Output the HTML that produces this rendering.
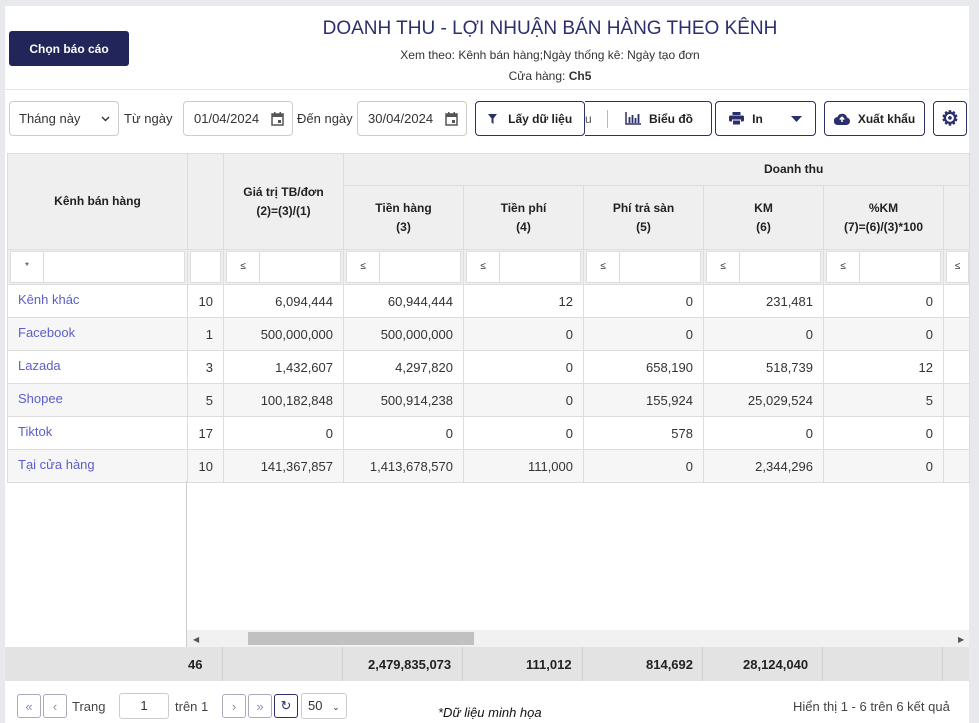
<!DOCTYPE html>
<html><head><meta charset="utf-8"><style>
*{box-sizing:border-box;margin:0;padding:0}
body{width:979px;height:723px;background:#e8e9ed;font-family:"Liberation Sans",Arial,sans-serif;color:#333;position:relative;overflow:hidden;font-size:13px}
.card{position:absolute;left:5px;top:6px;width:964px;height:717px;background:#fff}
.a{position:absolute}
.btn{position:absolute;border:1px solid #2b2f6b;border-radius:4px;background:#fff;color:#222;font-weight:bold;font-size:12px;display:flex;align-items:center;justify-content:center;gap:8px}
.inp{position:absolute;border:1px solid #ccc;border-radius:4px;background:#fff;font-size:13px;color:#333;display:flex;align-items:center}
table{border-collapse:collapse;table-layout:fixed;position:absolute;left:7px;top:153px;width:962px}
td,th{border:1px solid #ddd;overflow:hidden;white-space:nowrap}
th{background:#efefef;font-size:12px;font-weight:bold;color:#222;line-height:19px}
td{height:33px;text-align:right;padding:0 10px 0 0;font-size:13px;color:#333}
td.n{text-align:left;padding-left:10px;color:#5b5ec9;vertical-align:top;padding-top:7px}
tr.g td{background:#f6f6f6}
.f{background:#efefef;height:34px;padding:0}
.fb{display:flex;height:100%;padding:1px 0}
.fb span{width:34px;background:#fff;border:1px solid #ddd;font-size:10px;text-align:center;line-height:30px;margin-left:2px}
.fb i{flex:1;background:#fff;border:1px solid #ddd;border-left:none;margin-right:2px}
.pb{position:absolute;top:694px;width:24px;height:24px;border:1px solid #aab;border-radius:3px;background:#fff;color:#8a8ab0;font-size:13px;display:flex;align-items:center;justify-content:center}
.cal{margin-left:auto;margin-right:8px}
</style></head><body>
<div class="card"></div>
<div class="a" style="left:9px;top:31px;width:120px;height:35px;background:#22255a;border-radius:3px;color:#fff;font-weight:bold;font-size:12px;display:flex;align-items:center;justify-content:center">Chọn báo cáo</div>
<div class="a" style="left:250px;top:18px;width:600px;text-align:center;font-size:19px;color:#2b2f6b">DOANH THU - LỢI NHUẬN BÁN HÀNG THEO KÊNH</div>
<div class="a" style="left:250px;top:48px;width:600px;text-align:center;font-size:12px;color:#333">Xem theo: Kênh bán hàng;Ngày thống kê: Ngày tạo đơn</div>
<div class="a" style="left:250px;top:69px;width:600px;text-align:center;font-size:12px;color:#333">Cửa hàng: <b>Ch5</b></div>
<div class="a" style="left:5px;top:89px;width:964px;height:1px;background:#e3e3e3"></div>

<div class="inp" style="left:9px;top:101px;width:110px;height:35px;padding-left:9px">Tháng này<svg class="cal" width="9" height="6" viewBox="0 0 9 6"><path d="M1 1l3.5 3.5L8 1" stroke="#333" stroke-width="1.4" fill="none"/></svg></div>
<div class="a" style="left:124px;top:111px;font-size:13px">Từ ngày</div>
<div class="inp" style="left:183px;top:101px;width:110px;height:35px;padding-left:10px">01/04/2024<svg class="cal" width="13" height="14" viewBox="0 0 13 14"><rect x="1" y="2" width="11" height="11" fill="none" stroke="#555" stroke-width="1.5"/><rect x="1" y="2" width="11" height="3" fill="#555"/><rect x="7" y="8" width="3" height="3" fill="#555"/><rect x="3" y="0" width="1.5" height="3" fill="#555"/><rect x="8.5" y="0" width="1.5" height="3" fill="#555"/></svg></div>
<div class="a" style="left:297px;top:111px;font-size:13px">Đến ngày</div>
<div class="inp" style="left:357px;top:101px;width:110px;height:35px;padding-left:10px">30/04/2024<svg class="cal" width="13" height="14" viewBox="0 0 13 14"><rect x="1" y="2" width="11" height="11" fill="none" stroke="#555" stroke-width="1.5"/><rect x="1" y="2" width="11" height="3" fill="#555"/><rect x="7" y="8" width="3" height="3" fill="#555"/><rect x="3" y="0" width="1.5" height="3" fill="#555"/><rect x="8.5" y="0" width="1.5" height="3" fill="#555"/></svg></div>
<div class="btn" style="left:585px;top:101px;width:127px;height:35px;border-left:none;border-radius:0 4px 4px 0"><span style="position:absolute;left:0;color:#555;font-weight:normal">u</span><span style="position:absolute;left:22px;top:8px;width:1px;height:18px;background:#bbb"></span><svg style="margin-left:22px" width="16" height="13" viewBox="0 0 16 13"><path d="M1 0v12h15" stroke="#2b2f6b" stroke-width="1.5" fill="none"/><path d="M4.5 5v6M7.5 3v8M10.5 6v5M13.5 2v9" stroke="#2b2f6b" stroke-width="1.8"/></svg>Biểu đồ</div>
<div class="btn" style="left:475px;top:101px;width:110px;height:35px"><svg width="9" height="10" viewBox="0 0 9 10"><path d="M0 0h9L5.5 4.5V10L3.5 8.5V4.5z" fill="#2b2f6b"/></svg>&nbsp;Lấy dữ liệu</div>
<div class="btn" style="left:715px;top:101px;width:101px;height:35px"><svg width="15" height="13" viewBox="0 0 15 13"><rect x="3.5" y="0" width="8" height="3" fill="#2b2f6b"/><rect x="0" y="3.5" width="15" height="6" rx="1.5" fill="#2b2f6b"/><rect x="3.5" y="8" width="8" height="5" fill="#2b2f6b" stroke="#fff" stroke-width="1"/></svg>In<svg style="margin-left:20px" width="11" height="6" viewBox="0 0 11 6"><path d="M0 0h11L5.5 6z" fill="#2b2f6b"/></svg></div>
<div class="btn" style="left:824px;top:101px;width:101px;height:35px"><svg width="16" height="12" viewBox="0 0 16 12"><path d="M4 12a4 4 0 0 1-.5-8A5 5 0 0 1 13 4.5 3.8 3.8 0 0 1 12.5 12z" fill="#2b2f6b"/><path d="M8 4v5M5.8 6.5L8 4.2l2.2 2.3" stroke="#fff" stroke-width="1.5" fill="none"/></svg>Xuất khẩu</div>
<div class="btn" style="left:933px;top:101px;width:34px;height:35px;font-size:20px;color:#2b2f6b">&#9881;</div>

<table>
<colgroup><col style="width:180px"><col style="width:36px"><col style="width:120px"><col style="width:120px"><col style="width:120px"><col style="width:120px"><col style="width:120px"><col style="width:120px"><col style="width:26px"></colgroup>
<tr style="height:32px"><th rowspan="2">Kênh bán hàng</th><th rowspan="2"></th><th rowspan="2">Giá trị TB/đơn<br>(2)=(3)/(1)</th><th colspan="6" style="text-align:left;padding-left:420px">Doanh thu</th></tr>
<tr style="height:64px"><th>Tiền hàng<br>(3)</th><th>Tiền phí<br>(4)</th><th>Phí trả sàn<br>(5)</th><th>KM<br>(6)</th><th>%KM<br>(7)=(6)/(3)*100</th><th></th></tr>
<tr><td class="f"><div class="fb"><span>*</span><i></i></div></td><td class="f"><div class="fb"><i style="border-left:1px solid #ddd;margin-left:2px"></i></div></td><td class="f"><div class="fb"><span>≤</span><i></i></div></td><td class="f"><div class="fb"><span>≤</span><i></i></div></td><td class="f"><div class="fb"><span>≤</span><i></i></div></td><td class="f"><div class="fb"><span>≤</span><i></i></div></td><td class="f"><div class="fb"><span>≤</span><i></i></div></td><td class="f"><div class="fb"><span>≤</span><i></i></div></td><td class="f"><div class="fb"><span>≤</span></div></td></tr>
<tr><td class="n">Kênh khác</td><td>10</td><td>6,094,444</td><td>60,944,444</td><td>12</td><td>0</td><td>231,481</td><td>0</td><td></td></tr>
<tr class="g"><td class="n">Facebook</td><td>1</td><td>500,000,000</td><td>500,000,000</td><td>0</td><td>0</td><td>0</td><td>0</td><td></td></tr>
<tr><td class="n">Lazada</td><td>3</td><td>1,432,607</td><td>4,297,820</td><td>0</td><td>658,190</td><td>518,739</td><td>12</td><td></td></tr>
<tr class="g"><td class="n">Shopee</td><td>5</td><td>100,182,848</td><td>500,914,238</td><td>0</td><td>155,924</td><td>25,029,524</td><td>5</td><td></td></tr>
<tr><td class="n">Tiktok</td><td>17</td><td>0</td><td>0</td><td>0</td><td>578</td><td>0</td><td>0</td><td></td></tr>
<tr class="g"><td class="n">Tại cửa hàng</td><td>10</td><td>141,367,857</td><td>1,413,678,570</td><td>111,000</td><td>0</td><td>2,344,296</td><td>0</td><td></td></tr>
</table>
<div class="a" style="left:186px;top:481px;width:1px;height:166px;background:#ccc"></div>
<div class="a" style="left:187px;top:630px;width:782px;height:17px;background:#f1f1f1"></div>
<div class="a" style="left:193px;top:635px;font-size:8px;color:#555">&#9664;</div>
<div class="a" style="left:958px;top:635px;font-size:8px;color:#555">&#9654;</div>
<div class="a" style="left:248px;top:632px;width:226px;height:13px;background:#c1c1c1"></div>
<div class="a" style="left:5px;top:647px;width:964px;height:34px;background:#e3e3e3"></div>
<div class="a" style="left:5px;top:647px;width:964px;height:34px;font-weight:bold;font-size:13px;color:#222">
<span class="a" style="left:183px;top:10px">46</span>
<span class="a" style="left:217px;top:0;width:1px;height:34px;background:#d0d0d0"></span>
<span class="a" style="left:337px;top:0;width:1px;height:34px;background:#d0d0d0"></span>
<span class="a" style="left:363px;top:10px">2,479,835,073</span>
<span class="a" style="left:457px;top:0;width:1px;height:34px;background:#d0d0d0"></span>
<span class="a" style="left:521px;top:10px">111,012</span>
<span class="a" style="left:577px;top:0;width:1px;height:34px;background:#d0d0d0"></span>
<span class="a" style="left:641px;top:10px">814,692</span>
<span class="a" style="left:697px;top:0;width:1px;height:34px;background:#d0d0d0"></span>
<span class="a" style="left:738px;top:10px">28,124,040</span>
<span class="a" style="left:817px;top:0;width:1px;height:34px;background:#d0d0d0"></span>
<span class="a" style="left:937px;top:0;width:1px;height:34px;background:#d0d0d0"></span>
</div>
<div class="pb" style="left:17px">&#171;</div>
<div class="pb" style="left:43px">&#8249;</div>
<div class="a" style="left:72px;top:699px;font-size:13px;color:#444">Trang</div>
<div class="a" style="left:119px;top:693px;width:50px;height:26px;border:1px solid #ccc;border-radius:3px;text-align:center;line-height:24px;font-size:13px">1</div>
<div class="a" style="left:175px;top:699px;font-size:13px;color:#444">trên 1</div>
<div class="pb" style="left:222px">&#8250;</div>
<div class="pb" style="left:248px">&#187;</div>
<div class="pb" style="left:274px;border-color:#2b2f6b;color:#2b2f6b">&#8635;</div>
<div class="a" style="left:301px;top:693px;width:46px;height:26px;border:1px solid #ccc;border-radius:3px;font-size:13px;line-height:24px;padding-left:6px">50 <span style="font-size:9px;margin-left:6px">&#8964;</span></div>
<div class="a" style="left:438px;top:705px;font-size:13px;font-style:italic;color:#111">*Dữ liệu minh họa</div>
<div class="a" style="left:793px;top:699px;font-size:13px;color:#444">Hiển thị 1 - 6 trên 6 kết quả</div>
</body></html>
